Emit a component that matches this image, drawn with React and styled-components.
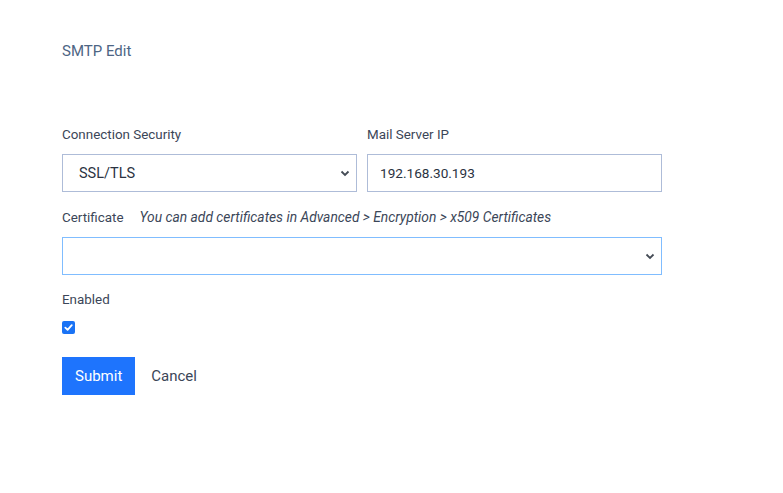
import React from "react";
import styled, { createGlobalStyle } from "styled-components";

const Global = createGlobalStyle`
  body {
    margin: 0;
    background: #ffffff;
    font-family: Roboto, "Liberation Sans", sans-serif;
  }
`;

function App() {
  return (
    <>
      <Global />
      <Page>
        <Title>SMTP Edit</Title>
        <Form>
          <Row>
            <Field>
              <Label>Connection Security</Label>
              <SelectBox>
                <span>SSL/TLS</span>
                <Chevron />
              </SelectBox>
            </Field>
            <Field>
              <Label>Mail Server IP</Label>
              <Input defaultValue="192.168.30.193" />
            </Field>
          </Row>
          <Field>
            <LabelRow>
              <Label>Certificate</Label>
              <Hint>You can add certificates in Advanced &gt; Encryption &gt; x509 Certificates</Hint>
            </LabelRow>
            <SelectBox $focus>
              <span />
              <Chevron />
            </SelectBox>
          </Field>
          <Field>
            <Label>Enabled</Label>
            <Check>
              <svg width="9" height="9" viewBox="0 0 10 10">
                <path d="M1.5 5.2 L4 7.6 L8.6 2.4" fill="none" stroke="#fff" strokeWidth="2" strokeLinecap="round" strokeLinejoin="round" />
              </svg>
            </Check>
          </Field>
          <Actions>
            <Submit>Submit</Submit>
            <Cancel>Cancel</Cancel>
          </Actions>
        </Form>
      </Page>
    </>
  );
}

function Chevron() {
  return (
    <svg width="10" height="7" viewBox="0 0 10 7">
      <path d="M1.5 1.5 L5 5 L8.5 1.5" fill="none" stroke="#444b55" strokeWidth="1.8" />
    </svg>
  );
}

const Page = styled.div`
  padding: 42px 62px;
  width: 600px;
`;

const Title = styled.div`
  font-size: 15px;
  color: #4d6584;
  margin-bottom: 67px;
`;

const Form = styled.div`
  display: flex;
  flex-direction: column;
  gap: 17px;
`;

const Row = styled.div`
  display: grid;
  grid-template-columns: 295px 295px;
  gap: 10px;
`;

const Field = styled.div`
  display: flex;
  flex-direction: column;
  gap: 11px;
`;

const LabelRow = styled.div`
  display: flex;
  align-items: baseline;
  gap: 16px;
`;

const Label = styled.div`
  font-size: 13.4px;
  line-height: 16px;
  color: #3b4658;
`;

const Hint = styled.div`
  font-size: 13.8px;
  font-style: italic;
  color: #3b4658;
`;

const SelectBox = styled.div`
  height: 38px;
  box-sizing: border-box;
  border: 1px solid ${(p) => (p.$focus ? "#80bdff" : "#aebcd8")};
  display: flex;
  align-items: center;
  justify-content: space-between;
  padding: 0 6px 0 16px;
  font-size: 14.5px;
  color: #2b3342;
`;

const Input = styled.input`
  height: 38px;
  box-sizing: border-box;
  border: 1px solid #aebcd8;
  padding: 0 12px;
  font-family: inherit;
  font-size: 13.6px;
  color: #2b3342;
  outline: none;
`;

const Check = styled.div`
  width: 13px;
  height: 13px;
  margin-top: 2px;
  border-radius: 2px;
  background: #1a73f5;
  display: flex;
  align-items: center;
  justify-content: center;
`;

const Actions = styled.div`
  display: flex;
  align-items: center;
  gap: 16px;
  margin-top: 6px;
`;

const Submit = styled.button`
  height: 38px;
  padding: 0 13px;
  border: none;
  background: #1e74fd;
  color: #fff;
  font-family: inherit;
  font-size: 15px;
`;

const Cancel = styled.span`
  font-size: 15px;
  color: #3b4658;
`;

export default App;
